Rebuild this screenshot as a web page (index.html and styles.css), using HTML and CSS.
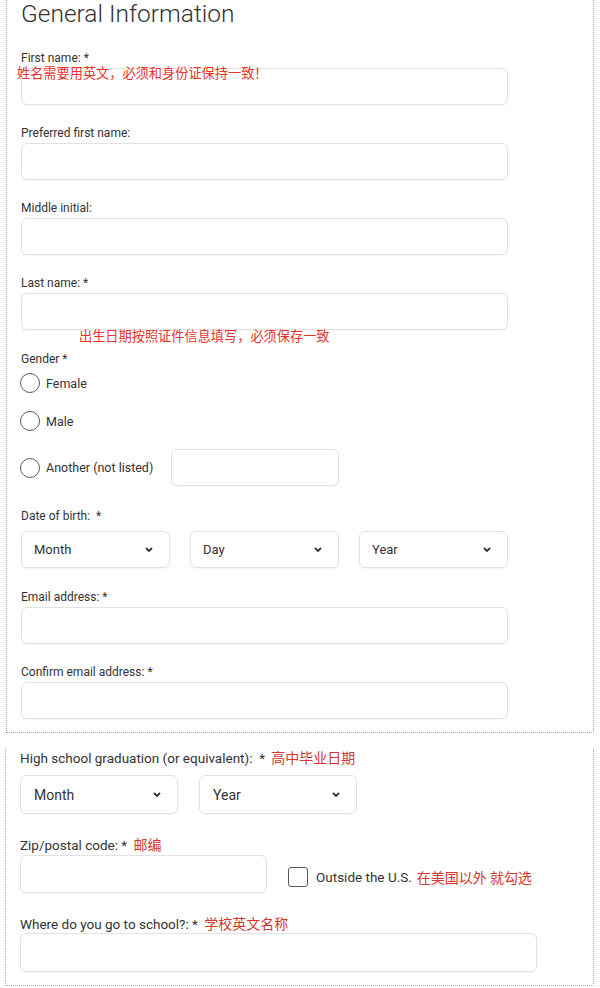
FILE: index.html
```html
<!DOCTYPE html>
<html lang="en">
<head>
<meta charset="utf-8">
<title>General Information</title>
<link rel="stylesheet" href="styles.css">
</head>
<body>
<section class="panel panel-top">
  <h1 class="title">General Information</h1>
  <span class="note note-name">姓名需要用英文，必须和身份证保持一致！</span>
  <span class="note note-dob">出生日期按照证件信息填写，必须保存一致</span>

  <div class="field">
    <label class="label">First name: *</label>
    <div class="input wide"></div>
  </div>
  <div class="field">
    <label class="label">Preferred first name:</label>
    <div class="input wide"></div>
  </div>
  <div class="field">
    <label class="label">Middle initial:</label>
    <div class="input wide"></div>
  </div>
  <div class="field">
    <label class="label">Last name: *</label>
    <div class="input wide"></div>
  </div>

  <div class="field loose">
    <label class="label">Gender *</label>
    <div class="radios">
      <div class="radio-row"><span class="radio"></span><span class="opt">Female</span></div>
      <div class="radio-row"><span class="radio"></span><span class="opt">Male</span></div>
      <div class="radio-row other"><span class="radio"></span><span class="opt">Another (not listed)</span><div class="input small"></div></div>
    </div>
  </div>

  <div class="field looser">
    <label class="label">Date of birth: &nbsp;*</label>
    <div class="selects">
      <div class="select"><span>Month</span><svg class="chev" width="8" height="6" viewBox="0 0 8 6"><polyline points="1,1 4,4 7,1" fill="none" stroke="#333" stroke-width="1.8"/></svg></div>
      <div class="select"><span>Day</span><svg class="chev" width="8" height="6" viewBox="0 0 8 6"><polyline points="1,1 4,4 7,1" fill="none" stroke="#333" stroke-width="1.8"/></svg></div>
      <div class="select"><span>Year</span><svg class="chev" width="8" height="6" viewBox="0 0 8 6"><polyline points="1,1 4,4 7,1" fill="none" stroke="#333" stroke-width="1.8"/></svg></div>
    </div>
  </div>

  <div class="field loose">
    <label class="label">Email address: *</label>
    <div class="input wide"></div>
  </div>
  <div class="field">
    <label class="label">Confirm email address: *</label>
    <div class="input wide"></div>
  </div>
</section>

<section class="panel panel-bottom">
  <div class="field">
    <label class="label">High school graduation (or equivalent): &nbsp;* <span class="red">高中毕业日期</span></label>
    <div class="selects">
      <div class="select"><span>Month</span><svg class="chev" width="8" height="6" viewBox="0 0 8 6"><polyline points="1,1 4,4 7,1" fill="none" stroke="#333" stroke-width="1.8"/></svg></div>
      <div class="select"><span>Year</span><svg class="chev" width="8" height="6" viewBox="0 0 8 6"><polyline points="1,1 4,4 7,1" fill="none" stroke="#333" stroke-width="1.8"/></svg></div>
    </div>
  </div>

  <div class="field">
    <label class="label">Zip/postal code: * <span class="red">邮编</span></label>
    <div class="zip-row">
      <div class="input zip"></div>
      <span class="checkbox"></span>
      <span class="opt">Outside the U.S.</span>
      <span class="red">在美国以外 就勾选</span>
    </div>
  </div>

  <div class="field">
    <label class="label">Where do you go to school?: * <span class="red">学校英文名称</span></label>
    <div class="input school"></div>
  </div>
</section>
</body>
</html>
```

FILE: styles.css
```css
html, body {
  margin: 0;
  padding: 0;
  background: #ffffff;
}

body {
  font-family: Roboto, "Noto Sans CJK SC", sans-serif;
  color: #333333;
}

.panel {
  box-sizing: border-box;
  position: relative;
  border-left: 1px dotted #a8a8a8;
  border-right: 1px dotted #a8a8a8;
  border-bottom: 1px dotted #a8a8a8;
}

.panel-top {
  margin-left: 6px;
  width: 588px;
  padding: 0 14px 13px 14px;
}

.panel-bottom {
  margin-left: 5px;
  width: 589px;
  padding: 0 14px 13px 14px;
}

.title {
  margin: 0;
  height: 30px;
  line-height: 28px;
  font-size: 24.5px;
  font-weight: 300;
  color: #333333;
}

.note {
  position: absolute;
  font-family: "Noto Sans CJK SC", sans-serif;
  font-size: 13.2px;
  line-height: 14px;
  color: #e8322b;
  white-space: nowrap;
}

.note-name {
  left: 10px;
  top: 66px;
}

.note-dob {
  left: 72px;
  top: 329px;
}

.red {
  font-family: "Noto Sans CJK SC", sans-serif;
  color: #d5372e;
  font-size: 14px;
  margin-left: 3px;
}

.field {
  display: flex;
  flex-direction: column;
  margin-top: 20px;
}

.field.loose {
  margin-top: 21px;
}

.field.looser {
  margin-top: 22px;
}

.label {
  display: block;
  font-size: 12px;
  line-height: 16px;
  height: 16px;
  color: #333333;
  white-space: nowrap;
}

.input {
  box-sizing: border-box;
  height: 37px;
  border: 1px solid #e2e2e2;
  border-radius: 6px;
  background: #ffffff;
  box-shadow: 0 1px 1px rgba(0, 0, 0, 0.04);
}

.wide {
  margin-top: 2px;
  width: 487px;
}

.radios {
  display: flex;
  flex-direction: column;
  margin-top: 6px;
  gap: 18px;
}

.radio-row {
  display: flex;
  align-items: center;
  height: 20px;
}

.radio-row.other {
  height: 37px;
}

.radio {
  box-sizing: border-box;
  width: 20px;
  height: 20px;
  border: 1px solid #5a5a5a;
  border-radius: 50%;
  margin-left: -1px;
  margin-right: 6px;
}

.opt {
  font-size: 12.5px;
  color: #333333;
}

.small {
  width: 168px;
  margin-left: 18px;
}

.selects {
  display: flex;
  gap: 20px;
  margin-top: 7px;
}

.select {
  box-sizing: border-box;
  width: 149px;
  height: 37px;
  border: 1px solid #e2e2e2;
  border-radius: 6px;
  display: flex;
  align-items: center;
  justify-content: space-between;
  padding: 0 16px 0 12px;
  font-size: 13px;
  color: #333333;
  box-shadow: 0 1px 1px rgba(0, 0, 0, 0.04);
}

.panel-bottom .field {
  margin-top: 16px;
}

.panel-bottom .field + .field {
  margin-top: 22px;
}

.panel-bottom .label {
  font-size: 13.5px;
}

.panel-bottom .selects {
  gap: 21px;
  margin-top: 10px;
}

.panel-bottom .select {
  width: 158px;
  height: 39px;
  font-size: 14px;
  padding: 0 16px 0 13px;
}

.zip-row {
  display: flex;
  align-items: center;
  margin-top: 3px;
}

.zip {
  width: 247px;
  height: 38px;
}

.checkbox {
  box-sizing: border-box;
  width: 20px;
  height: 20px;
  border: 1px solid #5a5a5a;
  border-radius: 3px;
  margin-left: 21px;
  margin-right: 8px;
  margin-top: 5px;
}

.zip-row .opt {
  font-size: 13.5px;
  margin-top: 5px;
  margin-right: 2px;
}

.zip-row .red {
  margin-top: 5px;
}

.school {
  margin-top: 2px;
  width: 517px;
  height: 39px;
}
```
